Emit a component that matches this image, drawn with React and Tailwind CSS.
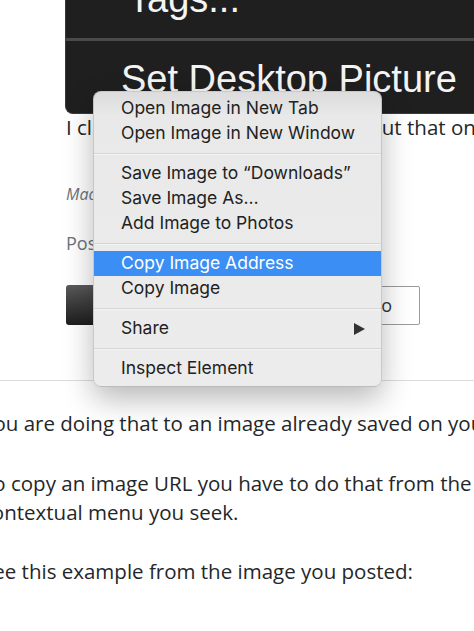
import React from "react";

const menuFont = { fontFamily: "Inter, 'Liberation Sans', sans-serif" };

function MenuItem({ label, active, arrow }) {
  return (
    <div
      className={`h-[25px] flex items-center justify-between pl-[27px] pr-[16px] text-[17.5px] ${
        active ? "bg-[#3b8ef3] text-white" : "text-[#222]"
      }`}
    >
      <span>{label}</span>
      {arrow && (
        <svg width="11" height="12" viewBox="0 0 11 12">
          <polygon points="0,0 11,6 0,12" fill="#333" />
        </svg>
      )}
    </div>
  );
}

function Separator() {
  return (
    <div className="h-[15px] flex items-center">
      <div className="w-full h-[2px] bg-[#d6d6d6] border-b border-[#f4f4f4]" />
    </div>
  );
}

function ContextMenu() {
  return (
    <div
      style={menuFont}
      className="absolute left-[93px] top-[91px] w-[289px] pt-[4px] pb-[5px] rounded-[8px] bg-[linear-gradient(#dcdcdc,#e9e9e9_24px,#ececec)] border border-black/15 shadow-[0_12px_30px_rgba(0,0,0,0.28)] overflow-hidden"
    >
      <MenuItem label="Open Image in New Tab" />
      <MenuItem label="Open Image in New Window" />
      <Separator />
      <MenuItem label="Save Image to “Downloads”" />
      <MenuItem label="Save Image As…" />
      <MenuItem label="Add Image to Photos" />
      <Separator />
      <MenuItem label="Copy Image Address" active />
      <MenuItem label="Copy Image" />
      <Separator />
      <MenuItem label="Share" arrow />
      <Separator />
      <MenuItem label="Inspect Element" />
    </div>
  );
}

export default function App() {
  return (
    <div
      className="relative w-[474px] h-[631px] overflow-hidden bg-white text-[#242729]"
      style={{ fontFamily: "'Open Sans', Lato, sans-serif" }}
    >
      {/* screenshot of the finder menu */}
      <div
        className="ml-[65px] h-[114px] overflow-hidden bg-[#1f1f1f] rounded-bl-[8px] border-l border-b border-[#3a3a3a] text-[#f4f4f4] whitespace-nowrap"
        style={{ fontFamily: "'Liberation Sans', Arial, sans-serif" }}
      >
        <div className="mt-[-20px] pl-[62px] text-[38px] leading-[38px]">Tags...</div>
        <div className="mt-[20px] h-[3px] bg-[#4a4a4a]" />
        <div className="mt-[19px] pl-[55px] text-[38px] leading-[38px]">Set Desktop Picture</div>
      </div>

      {/* question text */}
      <div className="pl-[66px]">
        <p className="mt-[-1px] text-[20.5px] leading-[29px] whitespace-nowrap">
          I clicked on this image in Safari, but that one
        </p>
        <p className="mt-[40px] text-[16px] leading-[24px] italic text-[#6a737c] whitespace-nowrap">
          MacOS High Sierra
        </p>
        <p className="mt-[24px] text-[18px] leading-[27px] text-[#6a737c] whitespace-nowrap">Posted by</p>

        <div className="mt-[28px] flex items-center gap-[20px]">
          <button className="w-[150px] h-[40px] rounded-[3px] bg-gradient-to-b from-[#5a5a5a] to-[#1e1e1e]" />
          <button className="w-[184px] h-[39px] rounded-[2px] border border-[#9a9a9a] bg-white flex items-center justify-end pr-[27px] text-[18px] text-[#333]">
            Photo
          </button>
        </div>
      </div>

      <div className="mt-[55px] h-px bg-[#dcdcdc]" />

      {/* answer */}
      <div className="mt-[28px] ml-[-18px] text-[20.5px] leading-[29px] whitespace-nowrap">
        <p>You are doing that to an image already saved on your computer.</p>
        <p className="mt-[31px]">To copy an image URL you have to do that from the browser,</p>
        <p>contextual menu you seek.</p>
        <p className="mt-[30px]">See this example from the image you posted:</p>
      </div>

      <ContextMenu />
    </div>
  );
}
